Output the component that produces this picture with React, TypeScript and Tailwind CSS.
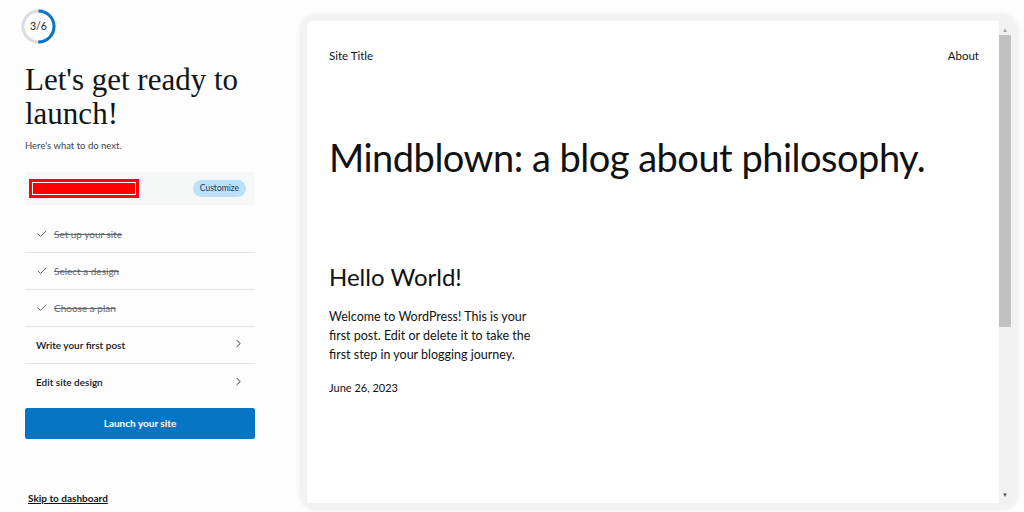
import { Check, ChevronRight } from "lucide-react";

const doneSteps = ["Set up your site", "Select a design", "Choose a plan"];
const todoSteps = ["Write your first post", "Edit site design"];

const uiFont = "font-['Lato',sans-serif]";

function ProgressRing() {
  // 3 of 6 done: half the ring, starting at the top, clockwise
  const r = 15.5;
  const c = 2 * Math.PI * r;
  return (
    <div className="relative h-[37px] w-[37px]">
      <svg width="37" height="37" viewBox="0 0 37 37" className="-rotate-90">
        <circle cx="18.5" cy="18.5" r={r} fill="none" stroke="#dcdcde" strokeWidth="3" />
        <circle
          cx="18.5"
          cy="18.5"
          r={r}
          fill="none"
          stroke="#0675c4"
          strokeWidth="3"
          strokeDasharray={`${c / 2} ${c}`}
        />
      </svg>
      <span className="absolute inset-0 flex items-center justify-center text-[10.5px] text-[#1e1e1e]">
        3/6
      </span>
    </div>
  );
}

function LaunchPanel() {
  return (
    <aside className={`flex h-full w-[280px] shrink-0 flex-col px-[25px] pb-[6px] pt-[8px] ${uiFont}`}>
      <div className="-ml-[5px]">
        <ProgressRing />
      </div>

      <h1 className="mt-[18px] font-['Liberation_Serif',serif] text-[31px] leading-[34px] text-[#101517]">
        Let's get ready to launch!
      </h1>
      <p className="mt-[8px] text-[9.5px] text-[#3c434a]">Here's what to do next.</p>

      <div className="mt-[19px] flex h-[33px] items-center justify-between rounded-[3px] bg-[#f6f7f7] pl-[4px] pr-[9px]">
        <div className="h-[19px] w-[110px] border border-[#ff0000] bg-[#ff0000] p-[2px]">
          <div className="h-full w-full border border-white" />
        </div>
        <span className="rounded-full bg-[#bbe0fa] px-[7px] py-[2px] text-[8.5px] text-[#1d3a57]">
          Customize
        </span>
      </div>

      <ul className="mt-[11px]">
        {doneSteps.map((step) => (
          <li
            key={step}
            className="flex h-[37px] items-center gap-[6px] border-b border-[#e2e2e2] pl-[11px] text-[10px] text-[#646970] line-through"
          >
            <Check size={12} strokeWidth={1.6} className="text-[#3c434a]" />
            {step}
          </li>
        ))}
        {todoSteps.map((step, i) => (
          <li
            key={step}
            className={`flex h-[37px] items-center justify-between pl-[11px] pr-[10px] text-[10px] font-semibold text-[#101517] ${
              i === 0 ? "border-b border-[#e2e2e2]" : ""
            }`}
          >
            {step}
            <ChevronRight size={13} strokeWidth={1.6} className="-mt-[3px]" />
          </li>
        ))}
      </ul>

      <button
        type="button"
        className="mt-[7px] h-[31px] w-full rounded-[2px] bg-[#0675c4] text-[10px] font-bold text-white"
      >
        Launch your site
      </button>

      <a href="#" className="mt-auto ml-[3px] text-[10px] font-bold text-[#101517] underline">
        Skip to dashboard
      </a>
    </aside>
  );
}

function SitePreview() {
  return (
    <div className="flex min-w-0 flex-1 pb-[2px] pl-[20px] pr-[6px] pt-[14px]">
      <div className="flex flex-1 rounded-[16px] bg-[#f2f2f2] p-[7px] shadow-[0_0_6px_rgba(0,0,0,0.06)]">
        <div className="flex flex-1 overflow-hidden rounded-t-[6px] bg-white">
          <div className={`flex-1 pl-[22px] pr-[20px] pt-[26px] ${uiFont} text-[#111]`}>
            <header className="flex items-center justify-between text-[11.5px]">
              <span>Site Title</span>
              <span>About</span>
            </header>
            <h2 className="mt-[69px] text-[38px] leading-[48px] tracking-[-0.5px]">
              Mindblown: a blog about philosophy.
            </h2>
            <h3 className="mt-[81px] text-[24px] leading-[30px]">Hello World!</h3>
            <p className="mt-[15px] w-[205px] text-[12.5px] leading-[19px]">
              Welcome to WordPress! This is your first post. Edit or delete it to take the first step in
              your blogging journey.
            </p>
            <p className="mt-[16px] text-[11px]">June 26, 2023</p>
          </div>

          <div className="flex w-[12px] flex-col items-center bg-[#f1f1f1]">
            <span className="mt-[5px] text-[6px] leading-[8px] text-[#a3a3a3]">▲</span>
            <div className="mt-[1px] h-[292px] w-full bg-[#c1c1c1]" />
            <span className="mt-auto mb-[4px] text-[6px] leading-[8px] text-[#505050]">▼</span>
          </div>
        </div>
      </div>
    </div>
  );
}

export default function App() {
  return (
    <div className="flex h-[512px] w-[1024px] overflow-hidden bg-[#fdfdfd]">
      <LaunchPanel />
      <SitePreview />
    </div>
  );
}
